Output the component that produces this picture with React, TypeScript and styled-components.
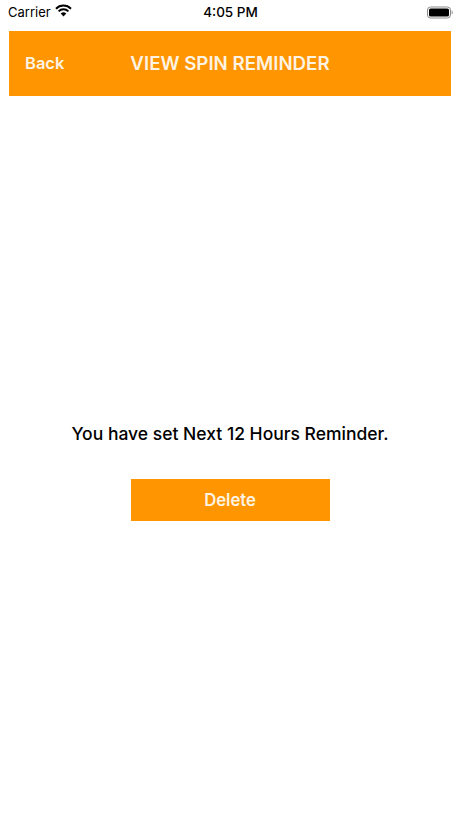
import styled, { createGlobalStyle } from 'styled-components';

const Global = createGlobalStyle`
  html, body {
    margin: 0;
    padding: 0;
    background: #fff;
  }
  body {
    font-family: Inter, "Liberation Sans", sans-serif;
  }
`;

const Screen = styled.div`
  width: 460px;
  height: 818px;
  overflow: hidden;
  display: flex;
  flex-direction: column;
  background: #fff;
`;

const StatusBar = styled.div`
  height: 31px;
  padding: 0 7px 7px 8px;
  box-sizing: border-box;
  display: grid;
  grid-template-columns: 1fr auto 1fr;
  align-items: center;
  color: #000;
  font-size: 13px;
`;

const Carrier = styled.div`
  display: flex;
  align-items: center;
  gap: 4px;
`;

const Wifi = styled.svg`
  margin-top: -3px;
`;

const Clock = styled.div`
  font-weight: 500;
  font-size: 13.5px;
`;

const Battery = styled.div`
  justify-self: end;
  display: flex;
`;

const NavBar = styled.div`
  height: 65px;
  margin: 0 9px;
  background: #ff9500;
  color: #fdf3e3;
  display: flex;
  align-items: center;
`;

const BackLabel = styled.div`
  margin-left: 16px;
  margin-bottom: 1px;
  font-size: 16.5px;
  font-weight: 600;
`;

const Title = styled.div`
  margin-left: 66px;
  font-size: 18.7px;
  font-weight: 600;
  white-space: nowrap;
`;

const Body = styled.div`
  display: flex;
  flex-direction: column;
  align-items: center;
  padding-top: 327px;
`;

const Message = styled.div`
  font-size: 17.5px;
  font-weight: 500;
  color: #000;
  line-height: 22px;
`;

const DeleteButton = styled.button`
  margin-top: 34px;
  width: 199px;
  height: 42px;
  border: 0;
  padding: 0;
  background: #ff9500;
  color: #fdf3e3;
  font-family: inherit;
  font-size: 16.7px;
  font-weight: 600;
`;

function WifiIcon() {
  return (
    <Wifi width="17" height="13" viewBox="0 0 17 13">
      <path d="M1 4.700a10.600 10.600 0 0 1 15 0" fill="none" stroke="#000" strokeWidth="2" />
      <path d="M3.600 7.400a6.900 6.900 0 0 1 9.800 0" fill="none" stroke="#000" strokeWidth="2" />
      <path d="M5.700 9.600a4 4 0 0 1 5.600 0L8.500 12.500z" fill="#000" />
    </Wifi>
  );
}

function BatteryIcon() {
  return (
    <svg width="26" height="13" viewBox="0 0 26 13">
      <rect x="0.5" y="1" width="23" height="11" rx="3" fill="none" stroke="#8a8a8a" />
      <rect x="2" y="2.500" width="20" height="8" rx="1.600" fill="#000" />
      <path d="M24.600 4.600c.8.300 1.200 1 1.200 1.900s-.4 1.600-1.200 1.900z" fill="#9a9a9a" />
    </svg>
  );
}

export default function App() {
  return (
    <Screen>
      <Global />
      <StatusBar>
        <Carrier>
          Carrier
          <WifiIcon />
        </Carrier>
        <Clock>4:05 PM</Clock>
        <Battery>
          <BatteryIcon />
        </Battery>
      </StatusBar>
      <NavBar>
        <BackLabel>Back</BackLabel>
        <Title>VIEW SPIN REMINDER</Title>
      </NavBar>
      <Body>
        <Message>You have set Next 12 Hours Reminder.</Message>
        <DeleteButton>Delete</DeleteButton>
      </Body>
    </Screen>
  );
}
